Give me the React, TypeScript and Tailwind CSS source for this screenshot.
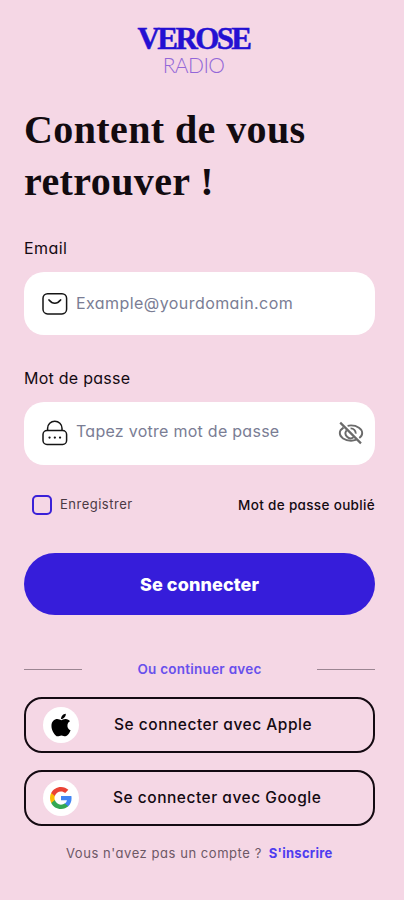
import type { ReactNode } from 'react'
import { FaApple } from 'react-icons/fa'

function MailIcon() {
  return <svg width="26" height="24" viewBox="0 0 26 24" fill="none" stroke="#151515" strokeWidth="1.5" strokeLinecap="round">
    <rect x="1" y="1.7" width="23.6" height="20.2" rx="4.6" />
    <path d="M7 8c3.600 4.300 8 4.300 11.600 0" strokeWidth="1.700" />
  </svg>
}

function LockIcon() {
  return <svg className="mb-[2px]" width="26" height="26" viewBox="0 0 26 26" fill="none" stroke="#151515" strokeWidth="1.5">
    <path d="M5.600 10.500V8.200a7.200 7 0 0 1 14.400 0v2.300" />
    <rect x="1" y="10.500" width="23.600" height="14" rx="4" />
    <path d="M7.500 17.600h.1M12.800 17.600h.1M18 17.600h.1" strokeWidth="2.200" strokeLinecap="round" />
  </svg>
}

function EyeOffIcon() {
  return <svg className="ml-auto mb-[2px]" width="26" height="24" viewBox="0 0 26 24" fill="none" stroke="#6a6a6a" strokeWidth="1.900">
    <path d="M5.500 6.600C3.300 8 1.800 10 1.800 12c0 4.200 5 7.700 11.200 7.700 2 0 3.800-.4 5.400-1M9.600 4.800c1.100-.3 2.200-.4 3.400-.4 6.200 0 11.200 3.500 11.200 7.600 0 2-1 3.700-2.900 5.100" />
    <path d="M8.600 9.200a5 5 0 0 0 7 7M12.600 7.400a5 5 0 0 1 5.200 5.200" />
    <path d="M2.200 1.600l20.800 20.800" strokeWidth="2.200" />
  </svg>
}

function GoogleIcon() {
  return <svg width="24" height="24" viewBox="0 0 24 24">
    <path fill="#4285F4" d="M22.560 12.250c0-.78-.07-1.530-.2-2.250H12v4.260h5.920c-.26 1.370-1.040 2.530-2.210 3.310v2.770h3.570c2.080-1.920 3.280-4.740 3.280-8.090z" />
    <path fill="#34A853" d="M12 23c2.970 0 5.460-.98 7.280-2.660l-3.570-2.770c-.98.66-2.230 1.060-3.710 1.060-2.860 0-5.290-1.930-6.160-4.530H2.180v2.840C3.990 20.530 7.700 23 12 23z" />
    <path fill="#FBBC05" d="M5.840 14.090c-.22-.66-.35-1.360-.35-2.090s.13-1.430.35-2.090V7.070H2.180C1.430 8.550 1 10.220 1 12s.43 3.450 1.180 4.930l3.660-2.840z" />
    <path fill="#EA4335" d="M12 5.380c1.620 0 3.060.56 4.210 1.640l3.150-3.150C17.450 2.090 14.970 1 12 1 7.700 1 3.990 3.470 2.180 7.070l3.660 2.840c.87-2.600 3.300-4.530 6.160-4.530z" />
  </svg>
}

function SocialButton({ icon, children }: { icon: ReactNode; children: ReactNode }) {
  return (
    <button className="flex items-center w-full h-14 rounded-[18px] border-2 border-[#140a12] pl-[17px]">
      <span className="flex items-center justify-center size-9 rounded-full bg-white">{icon}</span>
      {children}
    </button>
  )
}

export default function App() {
  return (
    <main className="flex flex-col h-[900px] w-full bg-[#f5d7e5] px-6 pr-[29px] text-[#140a12] font-['Inter',sans-serif] [font-feature-settings:'cv11']">
      <header className="flex flex-col items-center pt-[23px] pr-[12px]">
        <div className="h-[31px] font-['Liberation_Serif',serif] font-bold text-[31px] leading-[31px] tracking-[-2.600px] text-[#2410d2] [-webkit-text-stroke:0.5px_#2410d2] whitespace-nowrap">VEROSE</div>
        <div className="h-[21px] font-['Lato',sans-serif] font-light text-[21px] leading-[21px] tracking-[-0.6px] text-[#9367d8]">RADIO</div>
      </header>

      <h1 className="mt-[29px] font-['Liberation_Serif',serif] font-bold text-[40px] leading-[52px] tracking-[0.4px] text-[#120b10] whitespace-nowrap">
        <span className="block">Content de vous</span>
        <span className="block">retrouver !</span>
      </h1>

      <label className="mt-7 h-6 text-[16px] leading-6 tracking-[0.4px]">Email</label>
      <div className="mt-3 flex items-center h-[63px] rounded-[20px] bg-white pl-[18px]">
        <MailIcon />
        <span className="ml-2 mb-[2px] text-[16px] tracking-[0.43px] text-[#7a7d94] whitespace-nowrap">Example@yourdomain.com</span>
      </div>

      <label className="mt-[31px] h-6 text-[16px] leading-6 tracking-[0.25px]">Mot de passe</label>
      <div className="mt-3 flex items-center h-[63px] rounded-[20px] bg-white pl-[18px] pr-[11px]">
        <LockIcon />
        <span className="ml-2 mb-[5px] text-[16px] tracking-[0.27px] text-[#7a7d94] whitespace-nowrap">Tapez votre mot de passe</span>
        <EyeOffIcon />
      </div>

      <div className="mt-[29px] flex items-center h-[22px] pl-2 text-[13px] whitespace-nowrap">
        <span className="size-5 rounded-[5px] border-2 border-[#3a20d8]" />
        <span className="ml-2 tracking-[0.5px] text-[#4a3944]">Enregistrer</span>
        <span className="ml-auto text-[13.5px] font-medium tracking-[0.33px]">Mot de passe oublié</span>
      </div>

      <button className="mt-[37px] h-[62px] rounded-full bg-[#361dda] text-[18px] font-extrabold tracking-[0.1px] text-white">Se connecter</button>

      <div className="mt-[44px] flex items-center justify-between h-5 text-[13.5px] font-semibold tracking-[0.25px] text-[#6850ec]">
        <span className="h-px w-[58px] bg-[#9b8592]" />
        <span>Ou continuer avec</span>
        <span className="h-px w-[58px] bg-[#9b8592]" />
      </div>

      <div className="mt-[18px] flex flex-col gap-[17px] text-[15.5px] font-medium tracking-[0.52px] whitespace-nowrap">
        <SocialButton icon={<FaApple className="size-[26px] text-black" />}>
          <span className="ml-[35px]">Se connecter avec Apple</span>
        </SocialButton>
        <SocialButton icon={<GoogleIcon />}>
          <span className="ml-[34px]">Se connecter avec Google</span>
        </SocialButton>
      </div>

      <p className="mt-[17px] h-5 pl-[42px] text-[13px] leading-5 text-[#6d5865] whitespace-nowrap">
        <span className="tracking-[0.55px]">Vous n'avez pas un compte ?</span>
        <a className="ml-[7px] font-bold tracking-[0.25px] text-[#4f3cf0]">S'inscrire</a>
      </p>
    </main>
  )
}
